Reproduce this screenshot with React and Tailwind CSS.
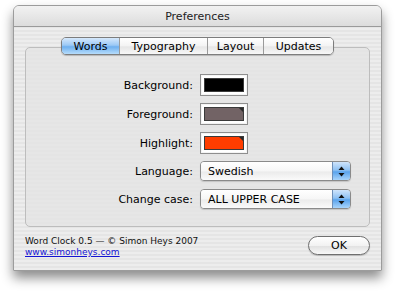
import React from "react";

// ─── Pieces ────────────────────────────────────────────────────────────────────
const TABS = ["Words", "Typography", "Layout", "Updates"];
const TAB_W = ["w-[57px]", "w-[88px]", "w-[56px]", "w-[70px]"];

function Tab({ label, active, idx }) {
  return (
    <div
      className={[
        "h-full flex items-center justify-center",
        TAB_W[idx],
        idx > 0 ? "border-l border-[#9a9a9a]" : "",
        active
          ? "bg-[linear-gradient(#d6e9fc,#9cc9f5_45%,#6eb0ef_55%,#b6dcfb)]"
          : "bg-[linear-gradient(#ffffff,#f3f3f3_50%,#e6e6e6_55%,#f7f7f7)]",
      ].join(" ")}
    >
      {label}
    </div>
  );
}

function Swatch({ color, corner }) {
  return (
    <div className="w-[48px] h-[22px] border border-[#8e8e8e] bg-white p-[3px] shadow-[inset_0_0_0_1px_#f4f4f4]">
      <div className="relative w-full h-full border border-[#3a3a3a]" style={{ background: color }}>
        {corner && (
          <svg className="absolute right-0 top-0" width="4" height="4" viewBox="0 0 4 4">
            <polygon points="0,0 4,0 4,4" fill="#2a2a2a" />
          </svg>
        )}
      </div>
    </div>
  );
}

function Popup({ value }) {
  return (
    <div className="w-[151px] h-[20px] flex rounded-[4px] border border-[#8a8a8a] overflow-hidden shadow-[0_1px_1px_rgba(0,0,0,0.15)]">
      <div className="flex-1 flex items-center pl-[7px] bg-[linear-gradient(#ffffff,#f6f6f6_50%,#ebebeb_55%,#fafafa)]">
        {value}
      </div>
      <div className="w-[18px] flex items-center justify-center border-l border-[#6e8fb8] bg-[linear-gradient(#cfe4fb,#8ec1f3_45%,#5aa3ec_55%,#a8d4fb)]">
        <svg width="7" height="11" viewBox="0 0 7 11">
          <polygon points="3.5,0.5 6.5,4 0.5,4" fill="#111" />
          <polygon points="0.5,7 6.5,7 3.5,10.5" fill="#111" />
        </svg>
      </div>
    </div>
  );
}

function Row({ label, children, mt }) {
  return (
    <div className={"flex items-center " + mt}>
      <div className="w-[174px] pr-[7px] text-right">{label}</div>
      {children}
    </div>
  );
}

// ─── Main ──────────────────────────────────────────────────────────────────────
export default function App() {
  return (
    <div
      className="w-[395px] h-[292px] bg-white pl-[13px] pt-[5px] text-[11px] text-black leading-none"
      style={{ fontFamily: '"DejaVu Sans", "Noto Sans", sans-serif' }}
    >
      <div className="w-[369px] h-[266px] flex flex-col rounded-t-[6px] border border-[#9c9c9c] overflow-hidden shadow-[0_7px_12px_rgba(0,0,0,0.45)] bg-[repeating-linear-gradient(0deg,#ededed_0px,#ededed_2px,#e5e5e5_2px,#e5e5e5_4px)]">
        {/* Title bar */}
        <div className="h-[21px] shrink-0 flex items-center justify-center border-b border-[#9a9a9a] bg-[linear-gradient(#f2f2f2,#dcdcdc)] text-[#222]">
          Preferences
        </div>

        <div className="flex-1 flex flex-col px-[11px] pt-[10px]">
          {/* Tabs */}
          <div className="relative z-10 flex justify-center">
            <div className="h-[18px] flex rounded-[5px] border border-[#7d7d7d] overflow-hidden shadow-[0_1px_1px_rgba(0,0,0,0.2)]">
              {TABS.map((t, i) => (
                <Tab key={t} label={t} active={i === 0} idx={i} />
              ))}
            </div>
          </div>

          {/* Group box */}
          <div className="-mt-[8px] h-[180px] rounded-[5px] border border-[#bdbdbd] bg-[#e3e3e3]/80 pt-[26px]">
            <Row label="Background:" mt="">
              <Swatch color="#000000" />
            </Row>
            <Row label="Foreground:" mt="mt-[7px]">
              <Swatch color="#726365" corner />
            </Row>
            <Row label="Highlight:" mt="mt-[7px]">
              <Swatch color="#ff3d00" corner />
            </Row>
            <Row label="Language:" mt="mt-[7px]">
              <Popup value="Swedish" />
            </Row>
            <Row label="Change case:" mt="mt-[8px]">
              <Popup value="ALL UPPER CASE" />
            </Row>
          </div>

          {/* Footer */}
          <div className="flex items-start justify-between mt-[8px]">
            <div className="pt-[1px] text-[9px] leading-[11px] text-[#111]">
              <div>Word Clock 0.5 — © Simon Heys 2007</div>
              <div className="text-[#1414d4] underline">www.simonheys.com</div>
            </div>
            <div className="mt-[1px] w-[62px] h-[19px] rounded-full border border-[#6f6f6f] flex items-center justify-center bg-[linear-gradient(#ffffff,#f2f2f2_50%,#e2e2e2_55%,#f8f8f8)] shadow-[0_1px_1px_rgba(0,0,0,0.2)]">
              OK
            </div>
          </div>
        </div>
      </div>
    </div>
  );
}
